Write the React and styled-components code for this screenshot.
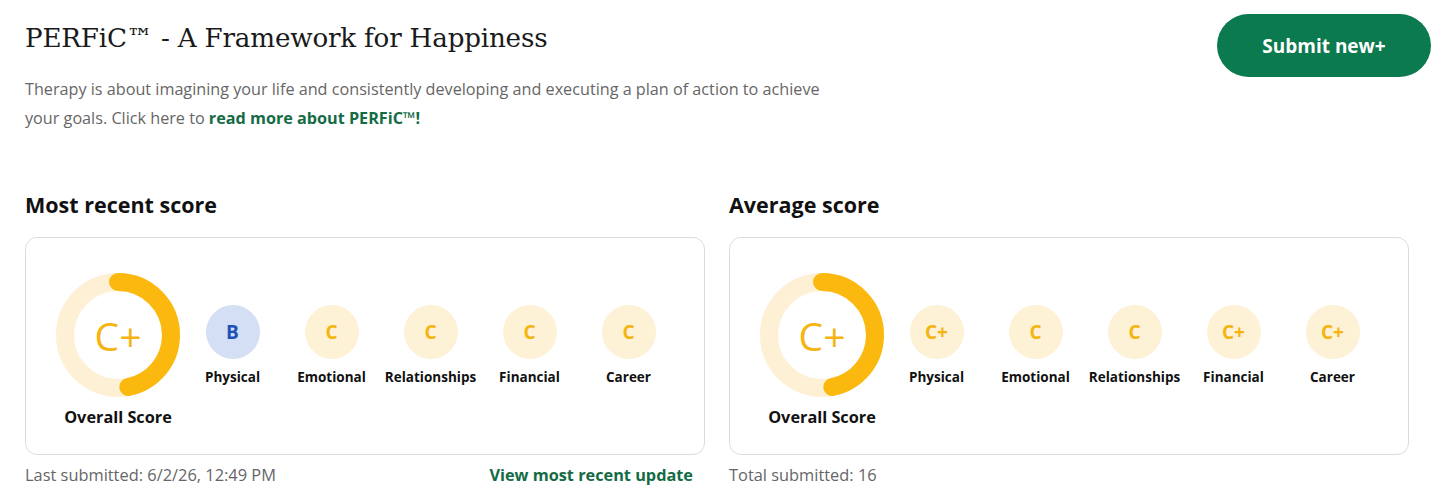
import React from "react";
import styled, { createGlobalStyle } from "styled-components";

const Global = createGlobalStyle`
  html, body { margin: 0; padding: 0; background: #fff; }
  body { font-family: "Open Sans", "Noto Sans", sans-serif; color: #111; }
`;

const Page = styled.div`
  padding: 14px 25px 0 25px;
  width: 1456px;
  box-sizing: border-box;
`;

const Header = styled.header`
  display: flex;
  justify-content: space-between;
  align-items: flex-start;
`;

const Intro = styled.div`
  display: flex;
  flex-direction: column;
`;

const Title = styled.h1`
  margin: 6px 0 0 0;
  font-family: "DejaVu Serif", "Liberation Serif", serif;
  font-weight: 400;
  font-size: 26.2px;
  line-height: 36px;
  color: #1a1a1a;
  letter-spacing: -0.2px;
`;

const Lead = styled.p`
  margin: 19px 0 0 0;
  width: 830px;
  font-size: 16.2px;
  line-height: 29px;
  color: #666;
`;

const Link = styled.a`
  color: #146b44;
  font-weight: 700;
  text-decoration: none;
`;

const SubmitButton = styled.button`
  width: 214px;
  height: 63px;
  border: none;
  border-radius: 32px;
  background: #0b7a4f;
  color: #fff;
  font-family: "Open Sans", sans-serif;
  font-weight: 700;
  font-size: 19px;
  cursor: pointer;
`;

const Columns = styled.div`
  display: grid;
  grid-template-columns: 680px 680px;
  column-gap: 24px;
  margin-top: 57px;
`;

const Section = styled.section`
  display: flex;
  flex-direction: column;
`;

const SectionTitle = styled.h2`
  margin: 0;
  font-size: 21.5px;
  line-height: 30px;
  font-weight: 700;
  color: #111;
`;

const Card = styled.div`
  margin-top: 17px;
  height: 218px;
  box-sizing: border-box;
  border: 1px solid #dcdcdc;
  border-radius: 12px;
  padding: 35px 0 0 30px;
  display: flex;
  align-items: flex-start;
`;

const Overall = styled.div`
  width: 124px;
  display: flex;
  flex-direction: column;
  align-items: center;
`;

const DonutWrap = styled.div`
  position: relative;
  width: 124px;
  height: 124px;
`;

const DonutLabel = styled.span`
  position: absolute;
  inset: 0;
  display: flex;
  align-items: center;
  justify-content: center;
  font-size: 39px;
  font-weight: 400;
  color: #f5b40f;
`;

const OverallCaption = styled.div`
  margin-top: 9px;
  font-size: 16.3px;
  font-weight: 700;
  line-height: 22px;
  color: #111;
`;

const Items = styled.div`
  display: flex;
  margin-left: 3px;
  padding-top: 32px;
`;

const Item = styled.div`
  width: 99px;
  display: flex;
  flex-direction: column;
  align-items: center;
`;

const Badge = styled.div`
  width: 54px;
  height: 54px;
  border-radius: 50%;
  display: flex;
  align-items: center;
  justify-content: center;
  background: ${(p) => (p.$tone === "blue" ? "#d4def5" : "#fdf1d6")};
  color: ${(p) => (p.$tone === "blue" ? "#1f52b6" : "#f5b40f")};
  font-weight: 700;
  font-size: 19px;
`;

const ItemLabel = styled.div`
  margin-top: 9px;
  font-size: 13.5px;
  line-height: 19px;
  font-weight: 700;
  color: #111;
  white-space: nowrap;
`;

const Footer = styled.div`
  display: flex;
  justify-content: space-between;
  align-items: center;
  margin-top: 8px;
  padding-right: 12px;
`;

const Meta = styled.span`
  font-size: 16.4px;
  line-height: 24px;
  color: #666;
`;

const FooterLink = styled.a`
  font-size: 16.3px;
  line-height: 24px;
  font-weight: 700;
  color: #146b44;
  text-decoration: none;
`;

function Donut({ grade, fraction }) {
  const r = 53;
  const c = 2 * Math.PI * r;
  return (
    <DonutWrap>
      <svg width="124" height="124" viewBox="0 0 124 124">
        <circle cx="62" cy="62" r={r} fill="none" stroke="#fdf0d4" strokeWidth="18" />
        <circle
          cx="62"
          cy="62"
          r={r}
          fill="none"
          stroke="#fbb80e"
          strokeWidth="18"
          strokeLinecap="round"
          strokeDasharray={`${c * fraction} ${c}`}
          transform="rotate(-90 62 62)"
        />
      </svg>
      <DonutLabel>{grade}</DonutLabel>
    </DonutWrap>
  );
}

function ScoreCard({ overall, items }) {
  return (
    <Card>
      <Overall>
        <Donut grade={overall} fraction={0.468} />
        <OverallCaption>Overall Score</OverallCaption>
      </Overall>
      <Items>
        {items.map(([label, grade, tone]) => (
          <Item key={label}>
            <Badge $tone={tone}>{grade}</Badge>
            <ItemLabel>{label}</ItemLabel>
          </Item>
        ))}
      </Items>
    </Card>
  );
}

const recent = [
  ["Physical", "B", "blue"],
  ["Emotional", "C"],
  ["Relationships", "C"],
  ["Financial", "C"],
  ["Career", "C"],
];

const average = [
  ["Physical", "C+"],
  ["Emotional", "C"],
  ["Relationships", "C"],
  ["Financial", "C+"],
  ["Career", "C+"],
];

export default function App() {
  return (
    <>
      <Global />
      <Page>
        <Header>
          <Intro>
            <Title>PERFiC™ - A Framework for Happiness</Title>
            <Lead>
              Therapy is about imagining your life and consistently developing and executing a plan of action to achieve
              your goals. Click here to <Link href="#">read more about PERFiC™!</Link>
            </Lead>
          </Intro>
          <SubmitButton>Submit new+</SubmitButton>
        </Header>
        <Columns>
          <Section>
            <SectionTitle>Most recent score</SectionTitle>
            <ScoreCard overall="C+" items={recent} />
            <Footer>
              <Meta>Last submitted: 6/2/26, 12:49 PM</Meta>
              <FooterLink href="#">View most recent update</FooterLink>
            </Footer>
          </Section>
          <Section>
            <SectionTitle>Average score</SectionTitle>
            <ScoreCard overall="C+" items={average} />
            <Footer>
              <Meta>Total submitted: 16</Meta>
            </Footer>
          </Section>
        </Columns>
      </Page>
    </>
  );
}
